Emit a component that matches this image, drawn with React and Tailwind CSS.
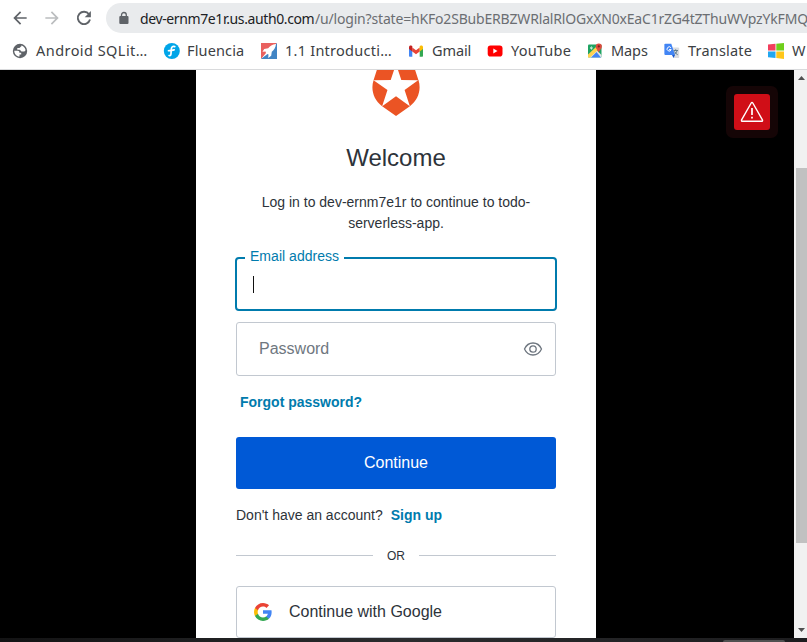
import React from 'react';
import { MdArrowBack, MdArrowForward } from 'react-icons/md';

const ui = "font-['Noto_Sans','Open_Sans',sans-serif]";

function Globe() {
  return (
    <svg viewBox="0 0 16 16" className="h-4 w-4">
      <circle cx="8" cy="8" r="7.2" fill="#5f6368" />
      <path d="M2.300 7.800h3.400c1.500 0 1.700.8 1.700 2h1.800v1.700H7.500v2.100C4.500 13.500 2.300 11 2.300 7.800zM9.300 2.500c2 .5 3.700 2.200 4.200 4.300.1.800-.4 1.600-1.400 1.600H9.800c-1.200 0-1.300-1.700-2.300-1.700H5.300V5h1.900c1.100 0 1-1.600 2.100-1.600z" fill="#fff" />
    </svg>
  );
}

function Reload() {
  return (
    <svg viewBox="0 0 20 20" className="ml-3 h-5 w-5 shrink-0">
      <path d="M15 6.200A6.200 6.200 0 1016 11.600" fill="none" stroke="#5f6368" strokeWidth="1.900" />
      <path d="M16.900 3v6.200h-6.200z" fill="#5f6368" />
    </svg>
  );
}

function Lock() {
  return (
    <svg viewBox="0 0 14 14" className="h-[14px] w-[14px] shrink-0">
      <rect x="2.300" y="5" width="9.200" height="8" rx="1" fill="#5f6368" />
      <path d="M4.500 5.500V3.900a2.400 2.400 0 014.800 0v1.600" fill="none" stroke="#5f6368" strokeWidth="1.300" />
    </svg>
  );
}

function Google() {
  return (
    <svg viewBox="1 1 22 22" className="h-[18px] w-[18px]">
      <path fill="#4285f4" d="M22.560 12.250c0-.78-.07-1.530-.2-2.250H12v4.260h5.920c-.26 1.370-1.040 2.530-2.210 3.310v2.770h3.570c2.080-1.920 3.280-4.740 3.280-8.090z" />
      <path fill="#34a853" d="M12 23c2.970 0 5.460-.98 7.280-2.660l-3.570-2.770c-.98.66-2.230 1.060-3.710 1.060-2.860 0-5.290-1.930-6.160-4.530H2.180v2.840C3.990 20.530 7.700 23 12 23z" />
      <path fill="#fbbc05" d="M5.840 14.090c-.22-.66-.35-1.360-.35-2.090s.13-1.430.35-2.090V7.070H2.180C1.430 8.550 1 10.220 1 12s.43 3.450 1.180 4.930l2.850-2.220.81-.62z" />
      <path fill="#ea4335" d="M12 5.380c1.620 0 3.060.56 4.210 1.640l3.150-3.150C17.450 2.090 14.970 1 12 1 7.700 1 3.990 3.470 2.180 7.070l3.660 2.840c.87-2.600 3.300-4.530 6.160-4.530z" />
    </svg>
  );
}

function Fluencia() {
  return (
    <svg viewBox="0 0 16 16" className="h-4 w-4 overflow-visible">
      <circle cx="8.800" cy="8" r="8" fill="#00a5e8" />
      <path d="M11.800 3.600C9.500 2.900 8.400 4 8.300 6.200L8 10.800c-.1 1.500-.6 2-1.900 1.700M5.500 7.700c1.700-1 3.800.3 5.700-.9" fill="none" stroke="#fff" strokeWidth="1.700" strokeLinecap="round" />
    </svg>
  );
}

function Rocket() {
  return (
    <svg viewBox="0 0 16 16" className="h-4 w-4">
      <path d="M0 0h16L0 16z" fill="#e9615f" />
      <path d="M16 0v16H0z" fill="#4285c4" />
      <path d="M15 1c-4 .5-6 2-7.800 4.200L3.200 6 1.500 8.800l3-.4L5 10l-4.500 5.500L6.500 11l1 .6-.3 3.400 3-2.300.6-4C13.200 6.800 14.600 4.500 15 1z" fill="#fff" />
    </svg>
  );
}

function Gmail() {
  return (
    <svg viewBox="0 0 16 16" className="h-4 w-4">
      <path d="M1 4v8.800c0 .6.400 1 1 1h2.300V6.500z" fill="#4285f4" />
      <path d="M15 4v8.800c0 .6-.4 1-1 1h-2.300V6.500z" fill="#34a853" />
      <path d="M4.300 4.500L8 7.300l3.700-2.800v4.100L8 11.300 4.300 8.600z" fill="#ea4335" />
      <path d="M1 5.900V4.200c0-1.700 1.600-2.200 2.700-1.400l.6.500v5.300z" fill="#c5221f" />
      <path d="M15 5.900V4.200c0-1.700-1.600-2.200-2.700-1.400l-.6.500v5.300z" fill="#fbbc04" />
    </svg>
  );
}

function YouTube() {
  return (
    <svg viewBox="0 0 16 16" className="h-4 w-4">
      <rect x="0.700" y="2.400" width="14.800" height="11.200" rx="2.800" fill="#f00" />
      <path d="M6.300 5.500v5l4.200-2.500z" fill="#fff" />
    </svg>
  );
}

function Maps() {
  return (
    <svg viewBox="0 0 16 16" className="h-4 w-4 overflow-visible">
      <rect x="1" y="1.500" width="13.500" height="13" rx="1" fill="#1ea362" />
      <path d="M2 14.500L9.500 7l5 5v2.500z" fill="#e5e5e5" />
      <path d="M4 14.500l5.500-5.500 4.500 5.500z" fill="#4285f4" />
      <path d="M1 11.500L9.500 3.500l2 3L3 14.500H1z" fill="#ffd34f" />
      <path d="M11.600 9.500C11 7 8.700 6.200 8.700 3.500a3.100 3.100 0 016.200 0c0 2.700-2.500 3.500-3.300 6z" fill="#dd4b3e" />
      <circle cx="11.800" cy="3.400" r="1.100" fill="#7c231b" />
      <path d="M5.600 4.700h-1v1h.6a1 1 0 11-.2-1.600" stroke="#fff" strokeWidth=".8" fill="none" />
    </svg>
  );
}

function Translate() {
  return (
    <svg viewBox="0 0 16 16" className="h-4 w-4">
      <path d="M7 4.500h7.300c.5 0 .9.400.9.900V14c0 .6-.4 1-.9 1H9.800z" fill="#dadce0" />
      <path d="M9.500 7.500H14M11.700 6.300v1.200M13 7.500c-.3 2-1.800 3.300-3 4M10.500 8.500c.6 1.500 1.800 2.600 3.200 3.200" stroke="#607d8b" strokeWidth="1" fill="none" />
      <path d="M1.300.7h6L11 12H1.300c-.5 0-.9-.4-.9-.9V1.600c0-.5.400-.9.900-.9z" fill="#4285f4" />
      <path d="M8 12h3l-1.500 3z" fill="#1a57c9" />
      <path d="M6.900 4.700a2.100 2.100 0 10.300 1.900H5" stroke="#fff" strokeWidth="1" fill="none" />
    </svg>
  );
}

function Windows() {
  return (
    <svg viewBox="0 0 16 16" className="h-4 w-4">
      <path d="M0 1.500L7.500.8v6.700H0z" fill="#f23f5d" />
      <path d="M8.300.7L16 0v7.500H8.300z" fill="#6fcf1b" />
      <path d="M0 8.500h7.500v6.400L0 14.200z" fill="#22a7f0" />
      <path d="M8.300 8.500H16V16l-7.700-.9z" fill="#ffc61a" />
    </svg>
  );
}

const bookmarks = [
  { label: 'Android SQLit…', icon: Globe, width: 'w-[151px]', track: 'tracking-[0.45px]' },
  { label: 'Fluencia', icon: Fluencia, width: 'w-[98px]', track: 'tracking-[0.15px]' },
  { label: '1.1 Introducti…', icon: Rocket, width: 'w-[147px]', track: 'tracking-[0.25px]' },
  { label: 'Gmail', icon: Gmail, width: 'w-[79px]', track: 'tracking-[-0.1px]' },
  { label: 'YouTube', icon: YouTube, width: 'w-[100px]', track: 'tracking-[0.2px]' },
  { label: 'Maps', icon: Maps, width: 'w-[77px]', track: 'tracking-[-0.1px]' },
  { label: 'Translate', icon: Translate, width: 'w-[104px]', track: 'tracking-[0.2px]' },
  { label: 'W', icon: Windows, width: 'w-[60px]', track: 'tracking-[0px]' },
];

function Browser() {
  return (
    <header className={`h-[70px] shrink-0 overflow-hidden border-b border-[#d9dadc] bg-white ${ui}`}>
      <div className="flex h-9 items-center pl-[10px]">
        <MdArrowBack className="h-5 w-5 shrink-0 text-[#5f6368]" />
        <MdArrowForward className="ml-3 h-5 w-5 shrink-0 text-[#bbbdbf]" />
        <Reload />
        <div className="ml-3 flex h-[30px] w-[720px] shrink-0 items-center rounded-l-full bg-[#e9ebed] pl-[11px]">
          <Lock />
          <div className="ml-[9px] flex text-[14px] whitespace-nowrap">
            <span className="w-[175px] tracking-[-0.38px] text-[#202124]">dev-ernm7e1r.us.auth0.com</span>
            <span className="tracking-[-0.18px] text-[#6b6e72]">/u/login?state=hKFo2SBubERBZWRlalRlOGxXN0xEaC1rZG4tZThuWVpzYkFMQ</span>
          </div>
        </div>
      </div>
      <nav className="flex h-[30px] w-[840px] items-center pl-3">
        {bookmarks.map(({ label, icon: Icon, width, track }) => (
          <div key={label} className={`flex shrink-0 items-center gap-2 ${width}`}>
            <Icon />
            <span className={`text-[14.5px] whitespace-nowrap text-[#3c4043] ${track}`}>{label}</span>
          </div>
        ))}
      </nav>
    </header>
  );
}

function LoginCard() {
  return (
    <main className="ml-[196px] flex w-[400px] shrink-0 flex-col items-stretch bg-white px-10 text-[14px] text-[#2d333a]">
      <svg viewBox="0 0 24 24" preserveAspectRatio="none" className="-mt-[6px] h-[52px] w-[54px] shrink-0 self-center">
        <path fill="#eb5424" d="M21.980 7.448L19.620 0H4.347L2.020 7.448c-1.352 4.312.030 9.206 3.815 12.015L12.007 24l6.157-4.552c3.755-2.810 5.182-7.688 3.815-12.015l-6.160 4.580 2.343 7.450-6.157-4.597-6.158 4.580 2.358-7.433-6.188-4.550 7.630-.045L12.008 0l2.356 7.404 7.615.044z" />
      </svg>
      <h1 className="mt-6 shrink-0 text-center text-[24px] leading-9">Welcome</h1>
      <p className="mt-4 shrink-0 px-4 text-center leading-[21px]">
        Log in to dev-ernm7e1r to continue to todo-<br />serverless-app.
      </p>
      <div className="relative -mx-px mt-[23px] flex h-[54px] shrink-0 items-center rounded-[4px] border-2 border-[#007bad] pl-4">
        <span className="absolute -top-3 left-2 bg-white px-[5px] leading-[18px] tracking-[0.03px] text-[#007bad]">Email address</span>
        <span className="h-[17px] w-px bg-[#111]" />
      </div>
      <div className="mt-[11px] flex h-[54px] shrink-0 items-center justify-between rounded-[3px] border border-[#c2c8d0] pr-3 pl-[22px] text-base text-[#6f7780]">
        <span className="-mt-px">Password</span>
        <svg viewBox="0 0 20 20" className="h-5 w-5" fill="none" stroke="#6f7780" strokeWidth="1.300">
          <path d="M1.500 10C3.300 6 6.300 4 10 4s6.700 2 8.500 6c-1.800 4-4.800 6-8.500 6s-6.700-2-8.500-6z" />
          <circle cx="10" cy="10" r="3.200" />
        </svg>
      </div>
      <a className="mt-4 ml-1 shrink-0 leading-5 font-bold text-[#007bad]">Forgot password?</a>
      <button className="mt-[25px] h-[52px] shrink-0 rounded-[3px] bg-[#0059d6] text-base text-white">Continue</button>
      <p className="mt-4 shrink-0 leading-[21px]">
        Don't have an account?<a className="ml-2 font-bold text-[#007bad]">Sign up</a>
      </p>
      <div className="mt-[19px] flex h-5 shrink-0 items-center text-[12px]">
        <span className="h-px flex-1 bg-[#c2c8d0]" />
        <span className="w-[46px] pt-px text-center">OR</span>
        <span className="h-px flex-1 bg-[#c2c8d0]" />
      </div>
      <button className="mt-[21px] flex h-[52px] shrink-0 items-center rounded-[3px] border border-[#c2c8d0] pl-[17px] text-base">
        <Google />
        <span className="ml-[17px]">Continue with Google</span>
      </button>
    </main>
  );
}

export default function App() {
  return (
    <div className="flex h-[642px] w-[807px] flex-col overflow-hidden bg-white font-['Liberation_Sans',Arial,sans-serif]">
      <Browser />
      <div className="flex h-[568px] shrink-0 overflow-hidden bg-black">
        <LoginCard />
        <aside className="mt-4 ml-[130px] flex h-[52px] w-[52px] shrink-0 items-center justify-center rounded-[7px] bg-[#150506]">
          <div className="flex h-9 w-9 items-center justify-center rounded-[3px] bg-[#d00e17]">
            <svg viewBox="0 0 24 24" className="h-6 w-6" fill="none" stroke="#fff" strokeWidth="1.400" strokeLinejoin="round">
              <path d="M11.200 3c.4-.7 1.200-.7 1.600 0l9.600 16.800c.4.700 0 1.500-.8 1.500H2.400c-.8 0-1.200-.8-.8-1.500z" />
              <path d="M12 8v7M12 16.800v1.800" strokeWidth="1.700" />
            </svg>
          </div>
        </aside>
        <div className="ml-4 flex w-[13px] shrink-0 flex-col items-end bg-[#f1f1f1]">
          <svg viewBox="0 0 11 14" className="h-[14px] w-[11px]">
            <path d="M2 10l3.500-4L9 10z" fill="#505050" />
          </svg>
          <div className="mt-[84px] h-[375px] w-[11px] bg-[#c1c1c1]" />
          <svg viewBox="0 0 11 14" className="mt-auto h-[14px] w-[11px]">
            <path d="M2 4l3.500 4L9 4z" fill="#505050" />
          </svg>
        </div>
      </div>
      <footer className="flex h-1 shrink-0 items-end bg-linear-to-r from-[#131314] via-[#2b2c2e] to-[#1c1c1e]">
        <div className="ml-[723px] h-[2px] w-[62px] rounded-t-sm bg-[#505050]" />
      </footer>
    </div>
  );
}
